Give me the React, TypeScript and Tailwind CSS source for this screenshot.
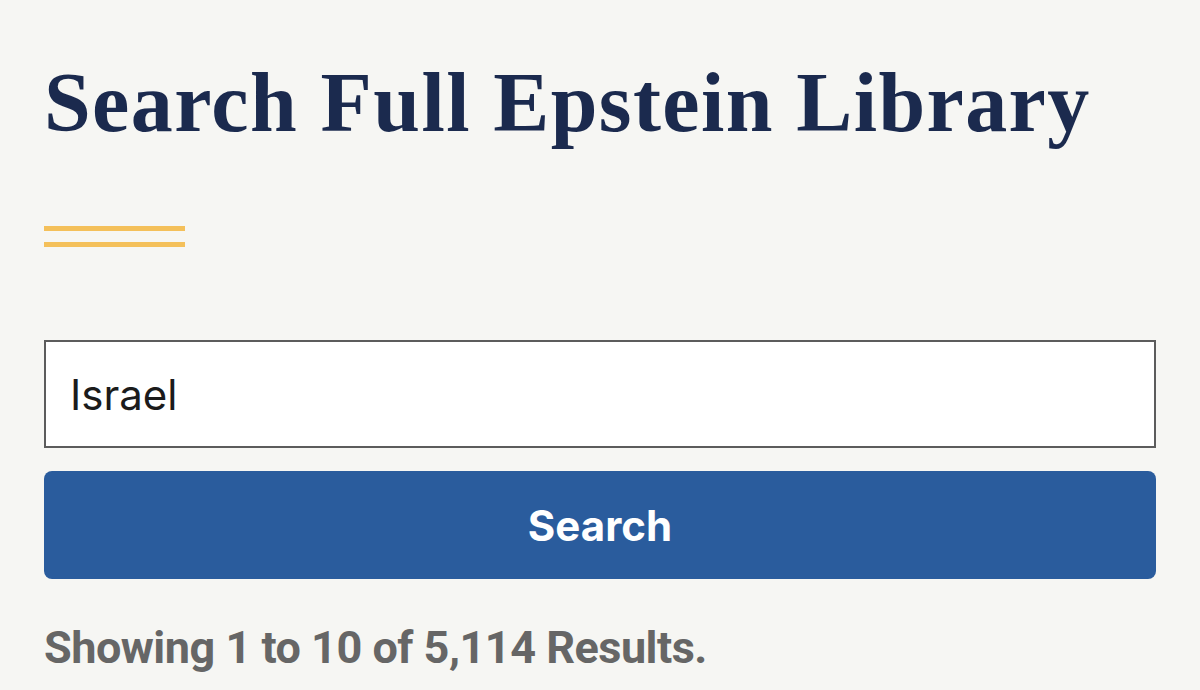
export default function App() {
  return (
    <div className="min-h-[690px] w-[1200px] bg-[#f6f6f3] px-[44px] pt-[53px] overflow-hidden">
      {/* Heading */}
      <h1 className="font-['Liberation_Serif',serif] text-[84px] leading-[100px] font-bold text-[#1b2a4e] tracking-[1.4px]">
        Search Full Epstein Library
      </h1>

      {/* Double rule */}
      <div className="mt-[73px] flex flex-col gap-[11px]">
        <div className="h-[5px] w-[141px] bg-[#f4c05a]" />
        <div className="h-[5px] w-[141px] bg-[#f4c05a]" />
      </div>

      {/* Search form */}
      <div className="mt-[93px] flex flex-col gap-[23px]">
        <input
          type="text"
          defaultValue="Israel"
          className="h-[108px] w-full border-2 border-[#5c5c5c] bg-white px-[24px] text-[42px] text-[#1b1b1b] font-['Inter',sans-serif] outline-none"
        />
        <button className="h-[108px] w-full rounded-[8px] bg-[#2a5c9d] text-[42px] font-bold text-white font-['Inter',sans-serif]">
          Search
        </button>
      </div>

      <p className="mt-[35px] text-[45px] font-bold text-[#666666] font-['Roboto',sans-serif] tracking-[-0.5px]">
        Showing 1 to 10 of 5,114 Results.
      </p>
    </div>
  )
}
